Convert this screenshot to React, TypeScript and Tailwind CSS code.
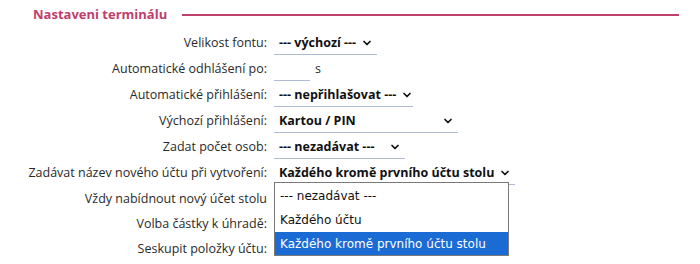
import { ChevronDown } from 'lucide-react'

const Select = ({ value, width }: { value: string; width?: string }) => (
  <div className={`flex items-center justify-between whitespace-nowrap border-b border-[#aebbd6] pb-[2px] pl-[5px] pr-[4px] pt-[2px] ${width ?? ''}`}>
    <span className="font-bold text-[#111]">{value}</span>
    <ChevronDown className="ml-[5px] h-[12px] w-[12px] shrink-0 text-[#111]" strokeWidth={3.5} />
  </div>
)

const App = () => {
  const rows: { label: string; field: React.ReactNode }[] = [
    { label: 'Velikost fontu:', field: <Select value="--- výchozí ---" width="w-[103px]" /> },
    {
      label: 'Automatické odhlášení po:',
      field: (
        <div className="flex items-center gap-[5px]">
          <div className="mt-[2px] h-[21px] w-[36px] border-b border-[#aebbd6]" />
          <span>s</span>
        </div>
      )
    },
    { label: 'Automatické přihlášení:', field: <Select value="--- nepřihlašovat ---" width="w-[139px]" /> },
    { label: 'Výchozí přihlášení:', field: <Select value="Kartou / PIN" width="w-[184px]" /> },
    { label: 'Zadat počet osob:', field: <Select value="--- nezadávat ---" width="w-[131px]" /> },
    { label: 'Zadávat název nového účtu při vytvoření:', field: <Select value="Každého kromě prvního účtu stolu" /> },
    { label: 'Vždy nabídnout nový účet stolu', field: null },
    { label: 'Volba částky k úhradě:', field: null },
    { label: 'Seskupit položky účtu:', field: null }
  ]

  const options = [
    { text: '--- nezadávat ---', h: 'h-[25px]' },
    { text: 'Každého účtu', h: 'h-[24px]' },
    { text: 'Každého kromě prvního účtu stolu', h: 'h-[23px]' }
  ]

  return (
    <div className="relative h-[264px] w-[700px] overflow-hidden bg-white font-['Open_Sans',sans-serif] text-[12.5px] text-[#2a2a2a]">
      {/* Header */}
      <div className="flex items-center pl-[33px] pr-[21px] pt-[5px]">
        <h2 className="text-[13px] font-bold text-[#c0406c]">Nastaveni terminálu</h2>
        <div className="ml-[15px] h-[2px] flex-1 bg-[#c0406c]" />
      </div>

      {/* Rows */}
      <div className="mt-[6px] grid grid-cols-[267px_1fr] gap-x-[7px]">
        {rows.map((row, i) => (
          <div key={row.label} className="contents">
            <div className={`flex items-center justify-end whitespace-nowrap ${i < 6 ? 'h-[26px]' : 'h-[25px]'}`}>
              {row.label}
            </div>
            <div className={`flex items-center ${i < 6 ? 'h-[26px]' : 'h-[25px]'}`}>{row.field}</div>
          </div>
        ))}
      </div>

      {/* Open dropdown */}
      <div className="absolute left-[274px] top-[182px] w-[235px] border border-[#7a7a7a] bg-white font-['DejaVu_Sans',sans-serif] text-[12px] text-[#111]">
        {options.map((opt, i) => (
          <div
            key={opt.text}
            className={`flex items-center px-[5px] ${opt.h} ${i === 2 ? 'bg-[#1b6bd5] text-white' : ''}`}
          >
            {opt.text}
          </div>
        ))}
      </div>
    </div>
  )
}

export default App
